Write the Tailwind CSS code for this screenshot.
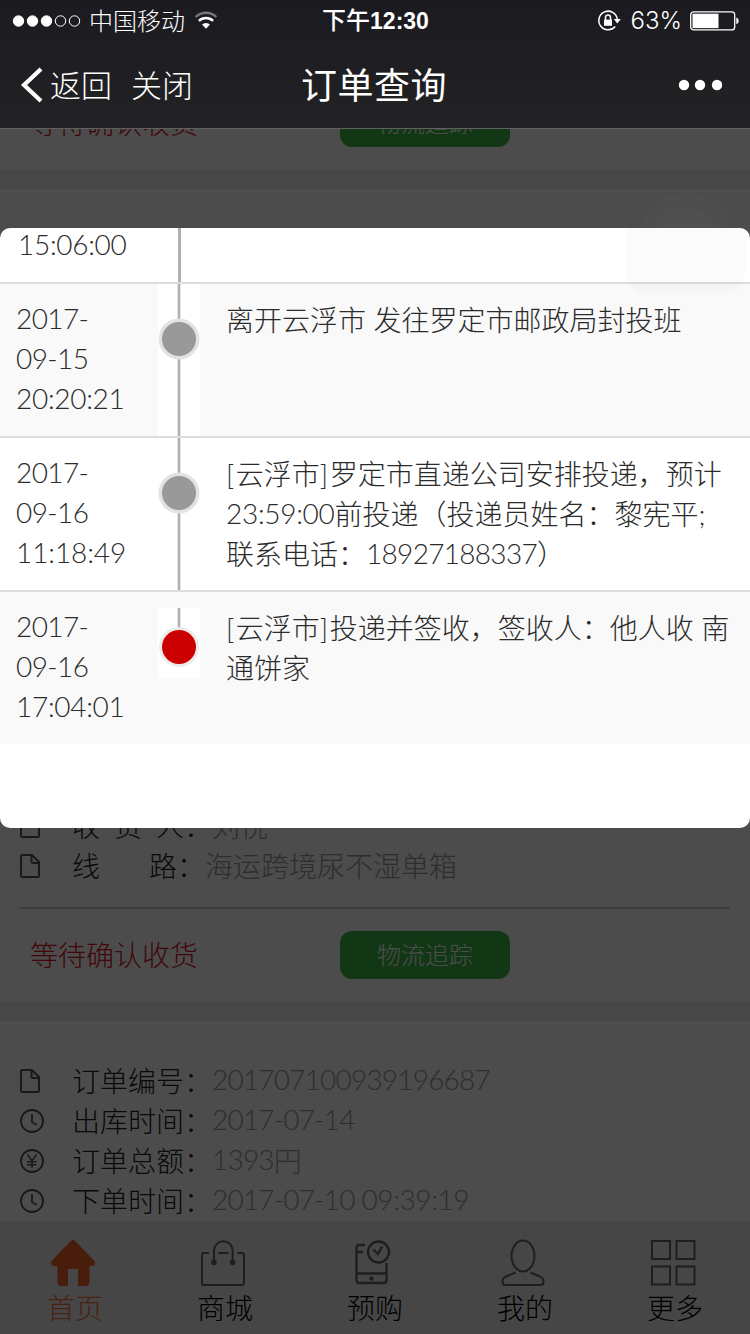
<!DOCTYPE html>
<html lang="zh-CN">
<head>
    <meta charset="UTF-8">
    <meta name="viewport" content="width=device-width, initial-scale=1.0">
    <title>订单查询</title>
    <script src="https://cdn.jsdelivr.net/npm/@tailwindcss/browser@4"></script>
</head>
<body class="w-[750px] h-[1334px] overflow-hidden bg-white font-['Lato','Noto_Sans_CJK_SC',sans-serif] font-light text-[28px] leading-[40px]">
<div class="relative h-[1334px] flex flex-col overflow-hidden">

    <!-- 顶部 -->
    <header class="h-32 shrink-0 bg-linear-to-b from-[#1a1a20] to-[#232325] text-white">
        <!-- 状态栏 -->
        <div class="h-[41px] grid grid-cols-[1fr_auto_1fr] items-center pl-[12px] pr-[11px] text-[24px] leading-[40px]">
            <div class="flex items-center">
                <svg class="w-[70px] h-3" viewBox="0 0 70 12" fill="#fff" stroke="#fff">
                    <circle cx="6.5" cy="6" r="5.2"/>
                    <circle cx="20.5" cy="6" r="5.2"/>
                    <circle cx="34.5" cy="6" r="5.2"/>
                    <circle cx="48.5" cy="6" r="5.2" fill="none"/>
                    <circle cx="62.5" cy="6" r="5.2" fill="none"/>
                </svg>
                <span class="ml-[7px]">中国移动</span>
                <svg class="ml-[9px] w-6 h-[19px]" viewBox="0 0 26 20" fill="none" stroke="#fff" stroke-width="2.6">
                    <path d="M1.8 6.2a16 16 0 0 1 22.4 0" stroke="#77777b"/>
                    <path d="M5.3 10.4a11 11 0 0 1 15.4 0"/>
                    <path d="M13 19l-4.3-4.6a6 6 0 0 1 8.6 0z" fill="#fff" stroke="none"/>
                </svg>
            </div>
            <span class="font-['Liberation_Sans','Noto_Sans_CJK_SC',sans-serif] font-medium">下午<b class="text-[23px]">12:30</b></span>
            <div class="flex items-center justify-end">
                <svg class="w-6 h-6" viewBox="0 0 24 24" fill="none" stroke="#fff" stroke-width="1.5">
                    <path d="M20.3 10A9.3 9.3 0 1 0 18.2 17.500"/>
                    <path d="M16.8 10h7l-3.500 4.500z" fill="#fff" stroke="none"/>
                    <path d="M7 10.600h8v6.200H7z" fill="#fff" stroke="none"/>
                    <path d="M8.500 11V8.600a2.500 2.500 0 0 1 5 0V11"/>
                </svg>
                <span class="ml-2.5 mr-2 font-['Inter',sans-serif] font-light">63%</span>
                <svg class="w-[49px] h-5" viewBox="0 0 49 20" fill="none" stroke="#fff">
                    <rect x=".7" y=".9" width="44" height="18" rx="3" stroke-width="1.3"/>
                    <path d="M2.5 2.700h26v14.400h-26z" fill="#fff" stroke="none"/>
                    <path d="M46.300 6.500a3.600 3.600 0 0 1 0 6.800z" fill="#fff" stroke="none"/>
                </svg>
            </div>
        </div>
        <!-- 导航栏 -->
        <nav class="h-[87px] grid grid-cols-[1fr_auto_1fr] items-center pl-5 pr-7">
            <div class="flex items-center text-[31px]">
                <svg class="w-6 h-9" viewBox="0 0 24 36" fill="none" stroke="#fff" stroke-width="4.2">
                    <path d="M21 2L4 18l17 16"/>
                </svg>
                <span class="ml-[6px]">返回</span>
                <span class="ml-[19px]">关闭</span>
            </div>
            <h1 class="pl-[6px] text-[36px] font-normal tracking-[0.5px]">订单查询</h1>
            <svg class="justify-self-end w-[44px] h-3" viewBox="0 0 44 12" fill="#fff">
                <circle cx="6" cy="6" r="5.2"/>
                <circle cx="22" cy="6" r="5.2"/>
                <circle cx="39" cy="6" r="5.2"/>
            </svg>
        </nav>
    </header>

    <!-- 订单列表 -->
    <main class="flex-1 min-h-0 bg-[#eee] flex flex-col gap-5 overflow-hidden">
        <section class="h-[41px] shrink-0 bg-white flex flex-col justify-end overflow-hidden pb-[22px]">
            <div class="flex items-center shrink-0 pl-[30px]">
                <span class="w-[310px] text-[#d8141e]">等待确认收货</span>
                <button class="w-[170px] h-12 rounded-[12px] bg-[#3cb944] text-[24px] text-white">物流追踪</button>
            </div>
        </section>

        <section class="h-[812px] shrink-0 bg-white flex flex-col justify-end overflow-hidden px-5 pb-[22px]">
            <div class="flex items-center h-10 shrink-0">
                <svg class="w-6 h-6" viewBox="0 0 24 24" fill="none" stroke="#555" stroke-width="2"><path d="M1 2.500Q1 1 2.500 1H12l7 7v13.500q0 1.500-1.500 1.500h-15Q1 23 1 21.500zM11.500 1v6.500q0 1.500 1.500 1.500h6"/></svg>
                <span class="ml-7 w-[112px] flex justify-between text-[#222]"><i class="not-italic">收</i><i class="not-italic">货</i><i class="not-italic">人</i></span>
                <span class="text-[#222]">：</span>
                <span class="text-[#999]">刘悦</span>
            </div>
            <div class="flex items-center h-10 shrink-0">
                <svg class="w-6 h-6" viewBox="0 0 24 24" fill="none" stroke="#555" stroke-width="2"><path d="M1 2.500Q1 1 2.500 1H12l7 7v13.500q0 1.500-1.500 1.500h-15Q1 23 1 21.500zM11.500 1v6.500q0 1.500 1.500 1.500h6"/></svg>
                <span class="ml-7 w-[105px] flex justify-between text-[#222]"><i class="not-italic">线</i><i class="not-italic">路</i></span>
                <span class="text-[#222]">：</span>
                <span class="text-[#999]">海运跨境尿不湿单箱</span>
            </div>
            <div class="mt-[21px] mb-[22px] h-0.5 shrink-0 bg-[#ccc]"></div>
            <div class="flex items-center shrink-0 pl-[10px]">
                <span class="w-[310px] text-[#d8141e]">等待确认收货</span>
                <button class="w-[170px] h-12 rounded-[12px] bg-[#3cb944] text-[24px] text-white">物流追踪</button>
            </div>
        </section>

        <section class="flex-1 min-h-0 bg-white overflow-hidden px-5 pt-10">
            <div class="flex items-center h-10">
                <svg class="w-6 h-6" viewBox="0 0 24 24" fill="none" stroke="#555" stroke-width="2"><path d="M1 2.500Q1 1 2.500 1H12l7 7v13.500q0 1.500-1.500 1.500h-15Q1 23 1 21.500zM11.500 1v6.500q0 1.500 1.500 1.500h6"/></svg>
                <span class="ml-7 text-[#222]">订单编号：</span>
                <span class="pb-1 text-[#999] tracking-[-0.8px]">201707100939196687</span>
            </div>
            <div class="flex items-center h-10">
                <svg class="w-6 h-6" viewBox="0 0 24 24" fill="none" stroke="#555" stroke-width="1.8"><circle cx="12" cy="12" r="11"/><path d="M12 5v8l4.500 3"/></svg>
                <span class="ml-7 text-[#222]">出库时间：</span>
                <span class="pb-1 text-[#999] tracking-[-0.8px]">2017-07-14</span>
            </div>
            <div class="flex items-center h-10">
                <svg class="w-6 h-6" viewBox="0 0 24 24" fill="none" stroke="#555" stroke-width="1.5"><circle cx="12" cy="12" r="11" stroke-width="1.8"/><path d="M7.500 5.500l4.500 6.500 4.500-6.500M12 12v7M7 12.700h9.500M7 15.700h9.500"/></svg>
                <span class="ml-7 text-[#222]">订单总额：</span>
                <span class="pb-1 text-[#999] tracking-[-0.8px]">1393</span>
                <span class="text-[#999]">円</span>
            </div>
            <div class="flex items-center h-10">
                <svg class="w-6 h-6" viewBox="0 0 24 24" fill="none" stroke="#555" stroke-width="1.8"><circle cx="12" cy="12" r="11"/><path d="M12 5v8l4.500 3"/></svg>
                <span class="ml-7 text-[#222]">下单时间：</span>
                <span class="pb-1 text-[#999] tracking-[-0.8px]">2017-07-10 <span class="tracking-[-0.4px]">09:39:19</span></span>
            </div>
        </section>
    </main>

    <!-- 底部菜单 -->
    <footer class="h-28 shrink-0 bg-[#ececec] border-t border-[#ddd] grid grid-cols-5 text-center text-black">
        <a class="flex flex-col items-center pt-4 text-[#f0743c]">
            <svg class="mr-1 w-[46px] h-12" viewBox="0 0 46 48" fill="#f0622a">
                <path d="M20.500 2.200Q23 0 25.500 2.200L44.500 22q1.500 4-1.500 5H39.500v16q0 4-4 4H28V30h-10v17h-6.500q-4 0-4-4V27H3Q0 26 1.500 22z"/>
            </svg>
            <span class="mt-px">首页</span>
        </a>
        <a class="flex flex-col items-center pt-4">
            <svg class="mr-1 w-[46px] h-12" viewBox="0 0 46 48" fill="none" stroke="#666" stroke-width="2">
                <path d="M9 14H4q-2 0-2 2v28q0 2 2 2h38q2 0 2-2V16q0-2-2-2h-5M18.500 14h10M14 23V11.500a9.300 9.300 0 0 1 18.600 0V23"/>
                <circle cx="14" cy="23.500" r="1.800" fill="#666"/>
                <circle cx="32.600" cy="23.500" r="1.800" fill="#666"/>
            </svg>
            <span class="mt-px">商城</span>
        </a>
        <a class="flex flex-col items-center pt-4">
            <svg class="mr-1 w-[46px] h-12" viewBox="0 0 46 48" fill="none" stroke="#666" stroke-width="2.400">
                <path d="M15 6H9.500Q6.500 6 6.500 9v32q0 3 3 3h24q3 0 3-3V24M6.500 13H13M6.500 34.500h30"/>
                <circle cx="28.500" cy="13" r="10.500"/>
                <path d="M23.500 10.500l4.500 4.500 4-7.500"/>
                <circle cx="21.500" cy="39.500" r="1" fill="#666"/>
            </svg>
            <span class="mt-px">预购</span>
        </a>
        <a class="flex flex-col items-center pt-4">
            <svg class="mr-1 w-[46px] h-12" viewBox="0 0 46 48" fill="none" stroke="#666" stroke-width="2">
                <ellipse cx="23" cy="17" rx="11.500" ry="15.500"/>
                <path d="M15.500 33.500L5 38q-2.500 1.500-2.500 4.500 0 3.500 3 3.500h35q3 0 3-3.500 0-3-2.500-4.500l-10.500-4.500"/>
            </svg>
            <span class="mt-px">我的</span>
        </a>
        <a class="flex flex-col items-center pt-4">
            <svg class="mr-1 w-[46px] h-12" viewBox="0 0 46 48" fill="none" stroke="#666" stroke-width="2">
                <path d="M2 2h18v18H2zM26.500 2h18v18h-18zM2 27.500h18v18H2zM26.500 27.500h18v18h-18z"/>
            </svg>
            <span class="mt-px">更多</span>
        </a>
    </footer>

    <!-- 遮罩 -->
    <div class="absolute inset-x-0 top-32 bottom-0 bg-black/70 border-t border-[#606060]"></div>

    <!-- 物流弹窗 -->
    <div class="absolute inset-x-0 top-[228px] h-[600px] rounded-[10px] bg-white overflow-hidden text-[#2b2b2b]">
        <div class="h-[54px] flex">
            <div class="w-[158px] pl-[18px] -mt-1 tracking-[-0.3px]">15:06:00</div>
            <div class="w-[42px] flex justify-center"><div class="w-[3px] bg-[#b0b0b0]"></div></div>
        </div>
        <div class="h-[154px] border-t-2 border-[#ddd] bg-[#f9f9f9] flex">
            <div class="w-[158px] pl-4 pt-[14px] tracking-[-0.6px]">2017-<br>09-15<br><span class="tracking-[-0.3px]">20:20:21</span></div>
            <svg class="w-[42px] h-[152px] bg-white" viewBox="0 0 42 152">
                <path d="M21 0v152" stroke="#b0b0b0" stroke-width="2.600"/>
                <circle cx="21" cy="55" r="20.500" fill="#e2e2e2"/>
                <circle cx="21" cy="55" r="17" fill="#999"/>
            </svg>
            <div class="flex-1 pl-[26px] pt-4">离开云浮市 发往罗定市邮政局封投班</div>
        </div>
        <div class="h-[154px] border-t-2 border-[#ddd] flex">
            <div class="w-[158px] pl-4 pt-[14px] tracking-[-0.6px]">2017-<br>09-16<br><span class="tracking-[-0.1px]">11:18:49</span></div>
            <svg class="w-[42px] h-[152px]" viewBox="0 0 42 152">
                <path d="M21 0v152" stroke="#b0b0b0" stroke-width="2.600"/>
                <circle cx="21" cy="55" r="20.500" fill="#e2e2e2"/>
                <circle cx="21" cy="55" r="17" fill="#999"/>
            </svg>
            <div class="flex-1 pl-[26px] pt-4 whitespace-nowrap"><span class="tracking-[1.5px]">[</span>云浮市<span class="tracking-[1.5px]">]</span>罗定市直递公司安排投递，预计<br><span class="inline-block -translate-y-px tracking-[-0.3px]">23:59:00</span>前投递（投递员姓名：黎宪平;<br>联系电话：<span class="inline-block -translate-y-px tracking-[-0.7px]">18927188337</span>）</div>
        </div>
        <div class="h-[154px] border-t-2 border-[#ddd] bg-[#f9f9f9] flex">
            <div class="w-[158px] pl-4 pt-[14px] tracking-[-0.6px]">2017-<br>09-16<br><span class="tracking-[-0.3px]">17:04:01</span></div>
            <svg class="mt-4 w-[42px] h-[70px] bg-white" viewBox="0 0 42 70">
                <path d="M21 0v20" stroke="#b0b0b0" stroke-width="2.600"/>
                <circle cx="21" cy="39" r="20" fill="#ececec"/>
                <circle cx="21" cy="39" r="17" fill="#c00"/>
            </svg>
            <div class="flex-1 pl-[26px] pt-4 whitespace-nowrap"><span class="tracking-[1.5px]">[</span>云浮市<span class="tracking-[1.5px]">]</span>投递并签收，签收人：他人收 南<br>通饼家</div>
        </div>
        <!-- 悬浮按钮的淡影 -->
        <div class="absolute left-[626px] -top-10 w-[119px] h-[105px] rounded-[20px] bg-black/[0.015]"></div>
    </div>
    <div class="absolute left-[641px] top-[193px] w-[90px] h-[90px] rounded-full bg-white/[0.01] p-[15px]">
        <div class="w-[60px] h-[60px] rounded-full bg-white/[0.015]"></div>
    </div>
</div>
</body>
</html>
